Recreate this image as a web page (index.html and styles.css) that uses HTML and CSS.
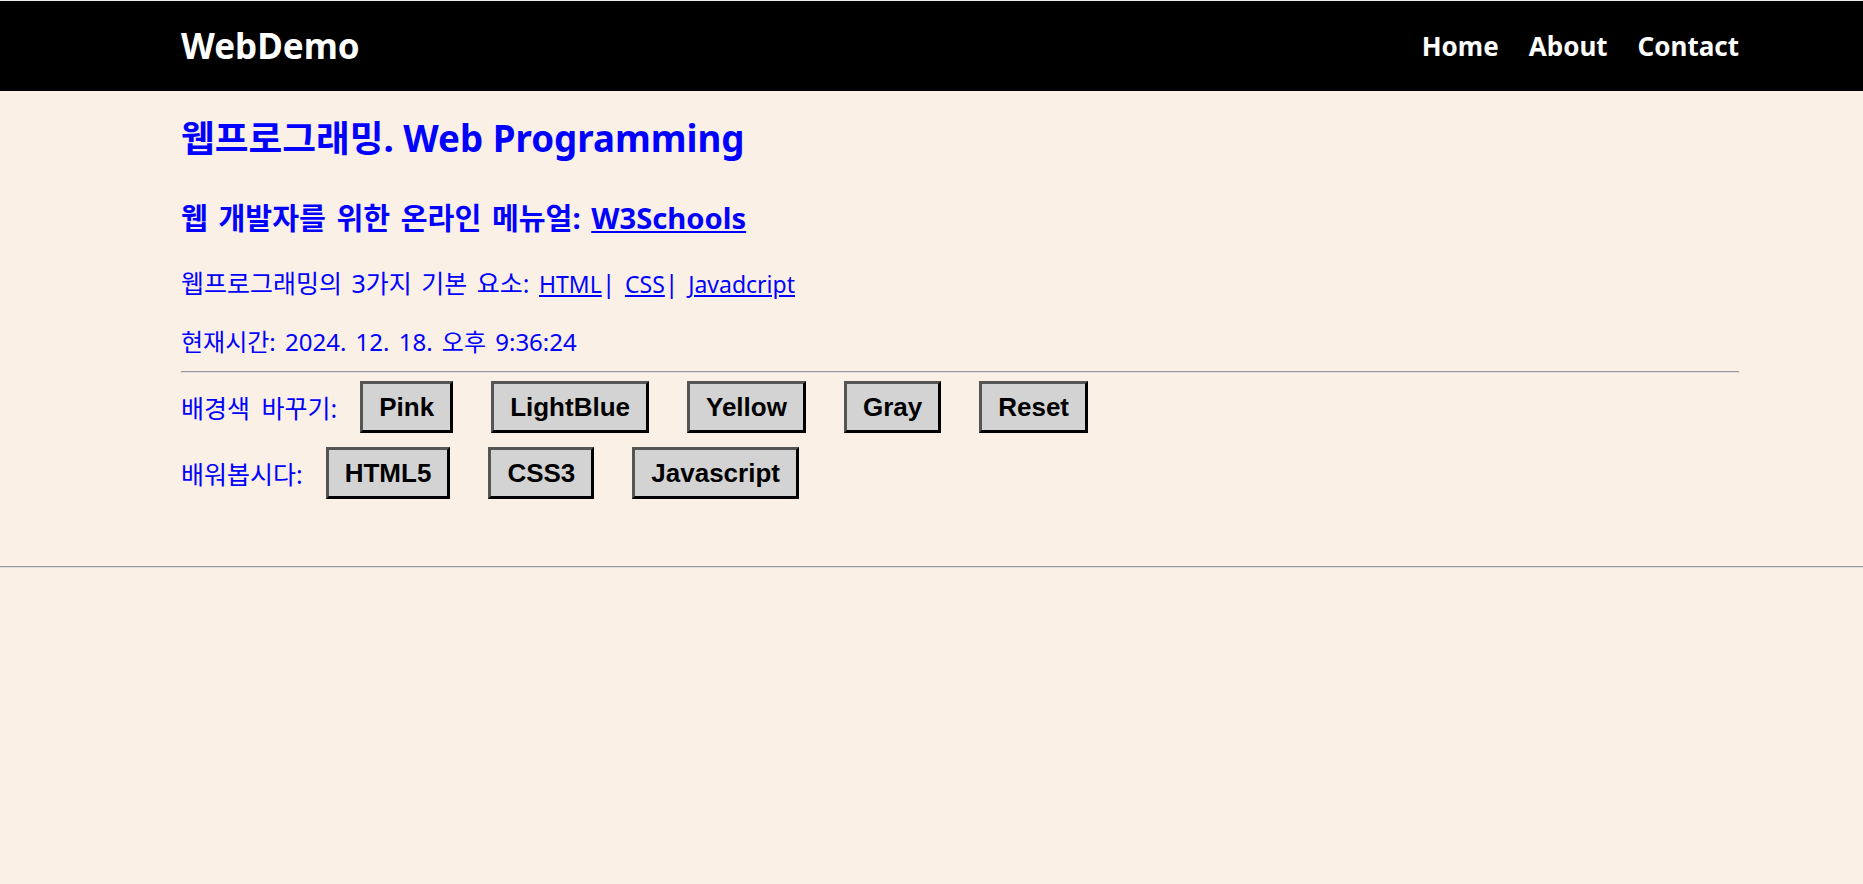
FILE: index.html
```html
<!DOCTYPE html>
<html lang="ko">
<head>
<meta charset="utf-8">
<title>WebDemo</title>
<link rel="stylesheet" href="styles.css">
</head>
<body>
<header class="topbar">
  <div class="bar-inner">
    <div class="logo">WebDemo</div>
    <nav class="nav">
      <a href="#">Home</a>
      <a href="#">About</a>
      <a href="#">Contact</a>
    </nav>
  </div>
</header>
<main class="content">
  <h1 class="title">웹프로그래밍. Web Programming</h1>
  <h2 class="subtitle">웹 개발자를 위한 온라인 메뉴얼: <a href="#">W3Schools</a></h2>
  <p class="line first">웹프로그래밍의 3가지 기본 요소: <a href="#">HTML</a>| <a href="#">CSS</a>| <a href="#">Javadcript</a></p>
  <p class="line second">현재시간: 2024. 12. 18. 오후 9:36:24</p>
  <hr class="rule">
  <div class="btn-row">
    <span class="label">배경색 바꾸기:</span>
    <button class="btn">Pink</button>
    <button class="btn">LightBlue</button>
    <button class="btn">Yellow</button>
    <button class="btn">Gray</button>
    <button class="btn">Reset</button>
  </div>
  <div class="btn-row">
    <span class="label">배워봅시다:</span>
    <button class="btn">HTML5</button>
    <button class="btn">CSS3</button>
    <button class="btn">Javascript</button>
  </div>
</main>
<hr class="full-rule">
</body>
</html>
```
FILE: styles.css
```css
html, body {
  margin: 0;
  padding: 0;
}
body {
  background: #faf0e6;
  font-family: "Noto Sans", "Noto Sans CJK KR", sans-serif;
  color: #0000ff;
  border-top: 1px solid #ececec;
}
.topbar {
  background: #000;
  height: 90px;
}
.bar-inner {
  height: 100%;
  margin: 0 124px 0 181px;
  display: flex;
  align-items: center;
  justify-content: space-between;
}
.logo {
  color: #fff;
  font-weight: bold;
  font-size: 35px;
  line-height: 42px;
}
.nav {
  display: flex;
  gap: 30px;
}
.nav a {
  color: #fff;
  text-decoration: none;
  font-weight: bold;
  font-size: 26px;
  line-height: 32px;
}
.content {
  margin: 0 124px 0 181px;
  display: flex;
  flex-direction: column;
}
.title {
  margin: 25px 0 0;
  font-size: 36.7px;
  line-height: 44px;
}
.subtitle {
  margin: 42px 0 0;
  font-size: 29.2px;
  line-height: 32px;
  word-spacing: 3px;
}
a {
  color: #0000ff;
}
.line {
  margin: 0;
  font-size: 24px;
  line-height: 28px;
  word-spacing: 3px;
}
.line.first {
  margin-top: 35px;
  font-size: 25px;
}
.line.second {
  margin-top: 30px;
}
.line a {
  font-size: 23px;
}
.rule {
  width: 100%;
  margin: 15px 0 0;
  border: 0;
  border-top: 1px solid #999;
  border-bottom: 1px solid #ddd;
  height: 0;
}
.btn-row {
  display: flex;
  align-items: center;
  margin-top: 8px;
}
.btn-row + .btn-row {
  margin-top: 14px;
}
.label {
  font-size: 25px;
  word-spacing: 5px;
  margin-right: 23px;
}
.btn {
  font-family: "Liberation Sans", Arial, sans-serif;
  font-weight: bold;
  font-size: 26px;
  line-height: 30px;
  color: #000;
  background: #d3d3d3;
  border: 3px outset #555;
  padding: 8px 16px;
  margin-right: 38px;
}
.full-rule {
  margin: 67px 0 0;
  border: 0;
  border-top: 1px solid #999;
  border-bottom: 1px solid #ddd;
  height: 0;
}
```
